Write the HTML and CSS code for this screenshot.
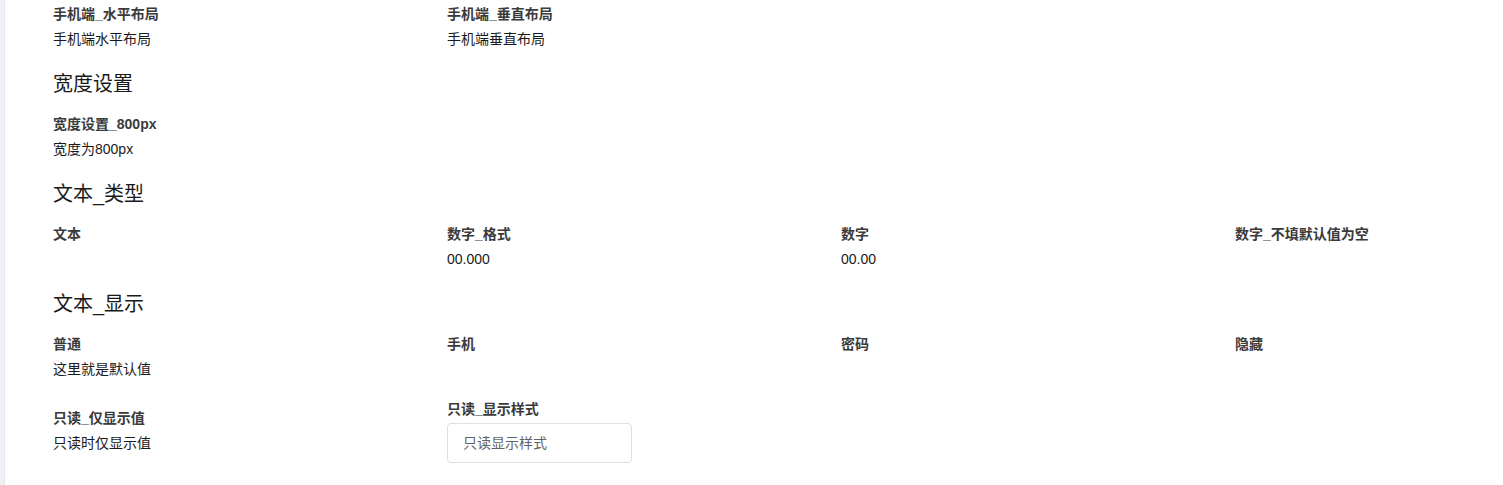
FILE: index.html
```html
<!DOCTYPE html>
<html lang="zh-CN">
<head>
<meta charset="utf-8">
<title>表单预览</title>
<link rel="stylesheet" href="styles.css">
</head>
<body>
<div class="layout">
  <div class="side"></div>
  <div class="main">
    <div class="row first">
      <div class="item"><div class="label">手机端_水平布局</div><div class="value">手机端水平布局</div></div>
      <div class="item"><div class="label">手机端_垂直布局</div><div class="value">手机端垂直布局</div></div>
    </div>

    <h2 class="title">宽度设置</h2>
    <div class="row">
      <div class="item"><div class="label">宽度设置_800px</div><div class="value">宽度为800px</div></div>
    </div>

    <h2 class="title">文本_类型</h2>
    <div class="row">
      <div class="item"><div class="label">文本</div><div class="value"></div></div>
      <div class="item"><div class="label">数字_格式</div><div class="value">00.000</div></div>
      <div class="item"><div class="label">数字</div><div class="value">00.00</div></div>
      <div class="item"><div class="label">数字_不填默认值为空</div><div class="value"></div></div>
    </div>

    <h2 class="title">文本_显示</h2>
    <div class="row">
      <div class="item"><div class="label">普通</div><div class="value">这里就是默认值</div></div>
      <div class="item"><div class="label">手机</div><div class="value"></div></div>
      <div class="item"><div class="label">密码</div><div class="value"></div></div>
      <div class="item"><div class="label">隐藏</div><div class="value"></div></div>
    </div>
    <div class="row center">
      <div class="item"><div class="label">只读_仅显示值</div><div class="value">只读时仅显示值</div></div>
      <div class="item"><div class="label tight">只读_显示样式</div><div class="input">只读显示样式</div></div>
    </div>
  </div>
</div>
</body>
</html>
```
FILE: styles.css
```css
html, body {
  margin: 0;
  padding: 0;
  background: #ffffff;
  overflow: hidden;
}
body {
  font-family: "Liberation Sans", "Noto Sans CJK SC", sans-serif;
  font-size: 14px;
  color: #1f1f1f;
}
.layout {
  display: flex;
  min-height: 485px;
}
.side {
  flex: 0 0 4px;
  background: #eef1f5;
  border-right: 1px solid #e3e7ec;
}
.main {
  flex: 1;
  padding-left: 48px;
  overflow: hidden;
}
.row {
  display: grid;
  grid-template-columns: repeat(4, 394px);
}
.row.first {
  padding-top: 2px;
}
.row + .row {
  margin-top: 17px;
}
.row.center {
  align-items: center;
}
.label {
  font-weight: 700;
  color: #3a3a3a;
  line-height: 24px;
  height: 24px;
  white-space: nowrap;
}
.label.tight {
  margin-bottom: 2px;
}
.value {
  padding-top: 1px;
  line-height: 24px;
  height: 23px;
  color: #1a1a1a;
  white-space: nowrap;
}
.title {
  margin: 20px 0 14px;
  font-size: 20px;
  font-weight: 400;
  line-height: 28px;
  color: #1a1a1a;
}
.input {
  box-sizing: border-box;
  width: 185px;
  height: 40px;
  border: 1px solid #dcdfe6;
  border-radius: 4px;
  padding-left: 15px;
  line-height: 38px;
  color: #606266;
}
```
